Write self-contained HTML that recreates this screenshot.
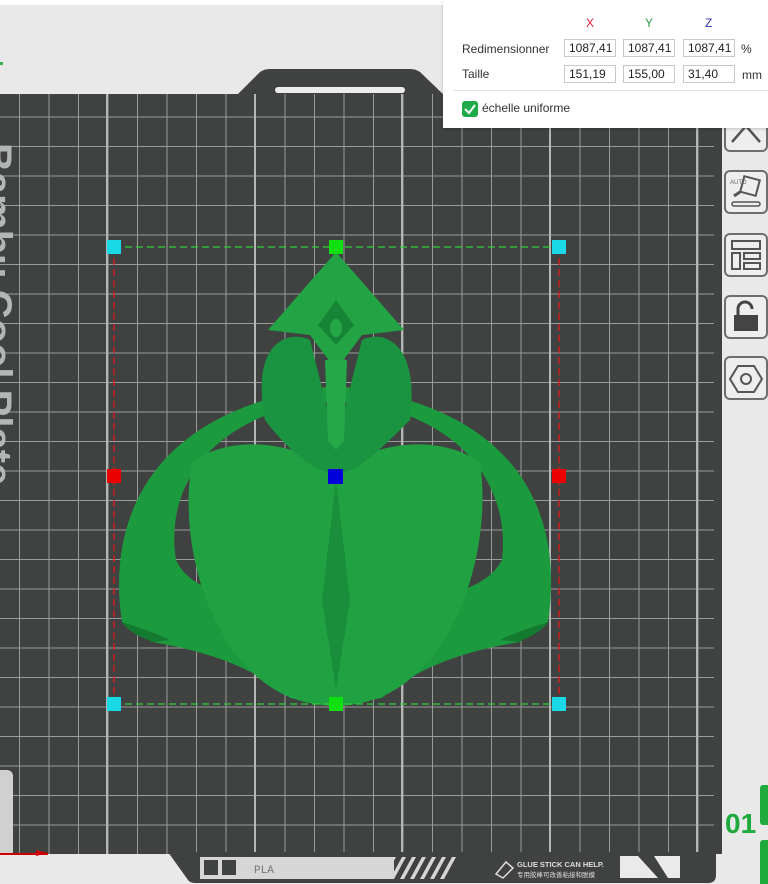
<!DOCTYPE html>
<html><head><meta charset="utf-8"><style>
*{margin:0;padding:0;box-sizing:border-box}
body{width:768px;height:884px;overflow:hidden;background:#e9e9e9;font-family:"Liberation Sans",sans-serif;position:relative}
.abs{position:absolute}
.plate{left:0;top:94px;width:722px;height:760px;background:#404241;
background-image:
repeating-linear-gradient(90deg,transparent 0,transparent 18.5px,#9a9c9b 18.5px,#9a9c9b 19.7px,transparent 19.7px,transparent 29.5px),
repeating-linear-gradient(180deg,transparent 0,transparent 22.5px,#9a9c9b 22.5px,#9a9c9b 23.7px,transparent 23.7px,transparent 29.5px);
background-size:29.5px 100%,100% 29.5px;background-position:0.5px 0,0 0}
.vl{top:94px;width:2px;height:760px;background:#b5b7b6}
.inp{position:absolute;width:52px;height:18px;border:1px solid #c8c8c8;font-size:12px;line-height:16px;padding-left:4px;color:#222}
.btn{position:absolute;left:724px;width:44px;height:44px;border:2px solid #6e6e6e;border-radius:6px;background:#eee}
.panel{left:443px;top:0;width:325px;height:128px;background:#fff;box-shadow:0 1px 3px rgba(0,0,0,.2);font-size:12px;color:#333}
</style></head><body>
<div class="abs" style="left:0;top:0;width:443px;height:5px;background:#fff"></div>
<div class="abs" style="left:0;top:62px;width:3px;height:3px;background:#2fb24f"></div>
<svg class="abs" style="left:220px;top:68px" width="230" height="30"><path d="M0,28 L16,28 L40,4 Q44,1 50,1 L190,1 Q196,1 200,4 L225,28 Z" fill="#404241"/><rect x="55" y="19" width="130" height="6" rx="3" fill="#ececec"/></svg>
<div class="abs plate"></div>
<div class="abs vl" style="left:106px"></div><div class="abs vl" style="left:254px"></div><div class="abs vl" style="left:401px"></div><div class="abs vl" style="left:549px"></div><div class="abs vl" style="left:696px"></div>
<div class="abs" style="left:714px;top:94px;width:8px;height:760px;background:#404241"></div>
<div class="abs" style="left:-24px;top:143px;height:330px;width:42px;writing-mode:vertical-rl;font-size:40px;line-height:42px;color:#b4b6b5;font-weight:bold;white-space:nowrap;overflow:visible">Bambu Cool Plate</div>
<div class="abs" style="left:0;top:770px;width:13px;height:84px;background:#cfd0cf;border-radius:0 6px 0 0"></div>
<div class="abs" style="left:0;top:853px;width:48px;height:2px;background:#c00"></div>
<svg class="abs" style="left:36px;top:848px" width="14" height="12"><path d="M0,2 L12,5 L0,8Z" fill="#c00"/></svg>
<svg class="abs" style="left:168px;top:850px" width="560" height="34"><path d="M0,2 L20,30 Q22,33 28,33 L540,33 Q548,33 548,25 L548,2 Z" fill="#404241"/>
<rect x="32" y="7" width="194" height="22" fill="#d5d6d5"/>
<rect x="36" y="10" width="14" height="15" fill="#404241"/><rect x="54" y="10" width="14" height="15" fill="#404241"/>
<text x="86" y="23" font-size="11" fill="#777" font-family="Liberation Mono">PLA</text>
<g fill="#d5d6d5"><path d="M212,29 L224,7 L228,7 L216,29Z M222,29 L234,7 L238,7 L226,29Z M232,29 L244,7 L248,7 L236,29Z M242,29 L254,7 L258,7 L246,29Z M252,29 L264,7 L268,7 L256,29Z M262,29 L274,7 L278,7 L266,29Z M272,29 L284,7 L288,7 L276,29Z"/></g>
<path d="M328,24 L338,12 L345,18 L335,28Z" fill="none" stroke="#ddd" stroke-width="1.5"/>
<text x="349" y="17" font-size="7.5" fill="#ddd" font-weight="bold">GLUE STICK CAN HELP.</text>
<text x="349" y="27" font-size="6.5" fill="#ddd" font-family="Noto Sans CJK SC">专用胶棒可改善粘接和脱模</text>
<rect x="452" y="6" width="60" height="22" fill="#eaeaea"/><path d="M470,6 L486,6 L500,28 L490,28Z" fill="#404241"/>
</svg>
<svg class="abs" style="left:0;top:0" width="722" height="884">
<path fill-rule="evenodd" fill="#1c9a3e" d="M122,622 C105,510 160,405 336,386 C515,405 565,510 548,622 L520,642 C470,650 420,665 382,698 L336,706 L290,698 C252,665 200,650 152,642 Z M176,560 C162,470 235,405 336,402 C440,405 512,470 502,560 C480,602 400,602 336,602 C270,602 195,602 176,560 Z"/>
<path d="M122,622 C130,635 150,640 152,642 L170,640 C150,630 130,625 122,622Z" fill="#137a30"/>
<path d="M548,622 C540,635 520,640 520,642 L500,640 C520,630 540,625 548,622Z" fill="#137a30"/>
<path d="M192,462 C230,435 290,440 336,470 C380,440 440,435 480,462 C490,530 470,620 420,670 C390,700 360,705 336,706 C310,705 280,700 250,670 C200,620 180,530 192,462Z" fill="#20a242"/>
<path d="M336,480 L322,600 L336,690 L350,600Z" fill="#1a8e3a"/>
<path d="M265,420 C250,340 290,330 310,340 C320,380 330,420 336,450 C342,420 352,380 362,340 C382,330 420,340 410,420 C390,440 370,460 352,470 L336,475 L320,470 C300,460 280,440 265,420Z" fill="#1a9440"/>
<path d="M336,252 L268,330 L310,335 L336,370 L362,335 L404,330Z" fill="#22a444"/>
<path d="M336,300 L318,325 L336,345 L354,325Z" fill="#178536"/>
<ellipse cx="336" cy="328" rx="6" ry="9" fill="#24a846"/>
<path d="M325,360 L347,360 L344,440 L336,450 L328,440Z" fill="#25a847"/>
<g stroke-dasharray="7,4" stroke-width="1.3" fill="none"><path d="M114,247 H559 M114,704 H559" stroke="#2fcf38"/><path d="M114,247 V704 M559,247 V704" stroke="#e01818"/></g>
<rect x="107" y="240" width="14" height="14" fill="#19d9e6"/><rect x="552" y="240" width="14" height="14" fill="#19d9e6"/><rect x="107" y="697" width="14" height="14" fill="#19d9e6"/><rect x="552" y="697" width="14" height="14" fill="#19d9e6"/>
<rect x="329" y="240" width="14" height="14" fill="#10e010"/><rect x="329" y="697" width="14" height="14" fill="#10e010"/>
<rect x="107" y="469" width="14" height="14" fill="#e00"/><rect x="552" y="469" width="14" height="14" fill="#e00"/>
<rect x="328" y="469" width="15" height="15" fill="#0000d8"/>
</svg>
<div class="btn" style="top:108px"><svg width="40" height="40"><path d="M6,32 L20,16 L34,32 M20,16 L6,2 M20,16 L34,2" stroke="#555" stroke-width="2.5" fill="none"/></svg></div>
<div class="btn" style="top:170px"><svg width="40" height="40"><text x="4" y="12" font-size="6" fill="#666">AUTO</text><rect x="16" y="6" width="16" height="16" transform="rotate(15 24 14)" fill="none" stroke="#555" stroke-width="2"/><path d="M8,24 L14,20" stroke="#555" stroke-width="3"/><rect x="6" y="30" width="28" height="4" rx="2" fill="none" stroke="#555" stroke-width="1.5"/></svg></div>
<div class="btn" style="top:233px"><svg width="40" height="40"><rect x="6" y="6" width="28" height="8" fill="none" stroke="#555" stroke-width="2"/><rect x="6" y="18" width="8" height="16" fill="none" stroke="#555" stroke-width="2"/><rect x="18" y="18" width="16" height="6" fill="none" stroke="#555" stroke-width="2"/><rect x="18" y="28" width="16" height="6" fill="none" stroke="#555" stroke-width="2"/></svg></div>
<div class="btn" style="top:295px"><svg width="40" height="40"><path d="M12,18 V12 A7,7 0 0 1 26,12" fill="none" stroke="#444" stroke-width="3"/><rect x="8" y="18" width="24" height="16" fill="#444"/></svg></div>
<div class="btn" style="top:356px"><svg width="40" height="40"><path d="M12,8 L28,8 L36,21 L28,34 L12,34 L4,21Z" fill="none" stroke="#555" stroke-width="2"/><circle cx="20" cy="21" r="5" fill="none" stroke="#555" stroke-width="2"/></svg></div>
<div class="abs" style="left:725px;top:808px;font-size:28px;font-weight:bold;color:#1faa3e">01</div>
<div class="abs" style="left:760px;top:785px;width:8px;height:40px;background:#1faa3e;border-radius:3px 0 0 3px"></div>
<div class="abs" style="left:760px;top:840px;width:8px;height:44px;background:#1faa3e;border-radius:3px 0 0 0"></div>
<div class="abs panel">
<span class="abs" style="left:143px;top:16px;color:#d23">X</span>
<span class="abs" style="left:202px;top:16px;color:#2a9a4a">Y</span>
<span class="abs" style="left:262px;top:16px;color:#33a">Z</span>
<span class="abs" style="left:19px;top:42px">Redimensionner</span>
<span class="abs" style="left:19px;top:67px">Taille</span>
<div class="inp" style="left:121px;top:39px">1087,41</div><div class="inp" style="left:180px;top:39px">1087,41</div><div class="inp" style="left:240px;top:39px">1087,41</div>
<span class="abs" style="left:298px;top:42px">%</span>
<div class="inp" style="left:121px;top:65px">151,19</div><div class="inp" style="left:180px;top:65px">155,00</div><div class="inp" style="left:240px;top:65px">31,40</div>
<span class="abs" style="left:299px;top:68px">mm</span>
<div class="abs" style="left:10px;top:90px;width:315px;height:1px;background:#e2e2e2"></div>
<div class="abs" style="left:19px;top:101px;width:16px;height:16px;background:#1faa4a;border-radius:3px"><svg width="16" height="16"><path d="M3,8 L7,12 L13,4" stroke="#fff" stroke-width="2" fill="none"/></svg></div>
<span class="abs" style="left:39px;top:101px">échelle uniforme</span>
</div>
</body></html>
